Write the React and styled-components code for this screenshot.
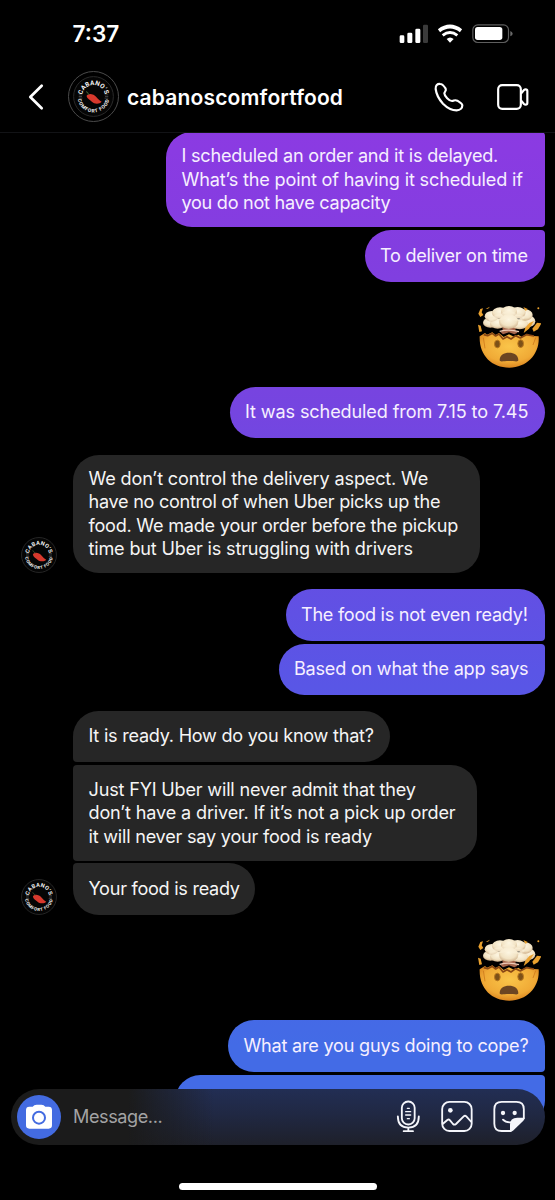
import React from "react"
import styled, { createGlobalStyle, css } from "styled-components"

const FONT = `Inter, "Liberation Sans", sans-serif`

const GlobalStyle = createGlobalStyle`
  * {
    box-sizing: border-box;
  }
  body {
    margin: 0;
    background: #000000;
    font-family: ${FONT};
  }
`

const Screen = styled.div`
  position: relative;
  width: 555px;
  height: 1200px;
  overflow: hidden;
  display: flex;
  flex-direction: column;
  background: #000000;
  color: #ffffff;
`

// ----------- top of the screen --------------
const StatusBar = styled.div`
  height: 66px;
  flex: none;
  display: flex;
  justify-content: space-between;
  align-items: center;
  padding: 0 41px 0 72.5px;
`

const Time = styled.span`
  font-size: 22.6px;
  line-height: 24px;
  font-weight: 600;
  letter-spacing: 0;
  padding-top: 1px;
`

const Header = styled.header`
  height: 67px;
  flex: none;
  display: flex;
  align-items: center;
  padding: 0 25px 5px 27px;
  border-bottom: 1px solid #121316;
`

const Back = styled.svg`
  width: 17px;
  height: 28px;
  margin-right: 24px;
`

const AvatarRing = styled.div`
  width: 51px;
  height: 51px;
  border: 1.5px solid #4b4b4b;
  border-radius: 50%;
  display: flex;
  align-items: center;
  justify-content: center;
`

const UserName = styled.h1`
  margin: 0 0 0 8px;
  padding-top: 3px;
  flex: 1;
  font-size: 21px;
  font-weight: 600;
  line-height: 26px;
  letter-spacing: 0.16px;
`

const CallIcons = styled.div`
  display: flex;
  align-items: center;
  gap: 31px;
`

// ----------- conversation --------------
const Thread = styled.main`
  flex: 1;
  min-height: 0;
  overflow: hidden;
  display: flex;
  flex-direction: column;
`

const Row = styled.div`
  flex: none;
  display: flex;
  align-items: flex-end;
  justify-content: ${props => (props.$mine ? "flex-end" : "flex-start")};
  margin-top: ${props => props.$gap}px;
  padding: 0 10.5px 0 21px;
`

const AvatarSlot = styled.div`
  width: 52px;
  height: 36px;
`

const radius = {
  single: "26px",
  mineFirst: "26px 26px 4px 26px",
  mineMiddle: "26px 4px 4px 26px",
  mineLast: "26px 4px 26px 26px",
  first: "26px 26px 26px 4px",
  middle: "4px 26px 26px 4px",
  last: "4px 26px 26px 26px",
}

const Bubble = styled.div`
  width: ${props => props.$width}px;
  height: ${props => props.$height}px;
  display: flex;
  flex-direction: column;
  justify-content: center;
  padding-left: 15.5px;
  padding-bottom: ${props => (props.$height > 52 ? 0 : 1)}px;
  border-radius: ${props => radius[props.$shape]};
  background: #262626;
  color: #f5f5f5;
  ${props =>
    props.$mine &&
    css`
      background: linear-gradient(
          180deg,
          #9338e2 0px,
          #8a3be2 150px,
          #823ee0 255px,
          #7545e0 412px,
          #6051e4 614px,
          #5a55e6 670px,
          #436be6 1045px,
          #436be6 1200px
        )
        fixed;
      color: #f6efff;
    `}
`

const Line = styled.span`
  font-size: 18.1px;
  line-height: 23.4px;
  letter-spacing: ${props => props.$track}px;
  white-space: nowrap;
`

const EmojiSvg = styled.svg`
  width: 64px;
  height: 64px;
  margin-right: 3.5px;
`

// ----------- composer --------------
const Composer = styled.div`
  position: absolute;
  left: 10.5px;
  top: 1088.5px;
  width: 534px;
  height: 56.5px;
  border-radius: 28.25px;
  display: flex;
  align-items: center;
  padding: 0 19.8px 0 6.5px;
  background:
    linear-gradient(90deg, #1b1b1b 22%, rgba(27, 27, 27, 0) 38%),
    linear-gradient(180deg, #222e54 0%, #202843 45%, #1e202a 100%);
`

const CameraButton = styled.div`
  width: 44px;
  height: 44px;
  border-radius: 50%;
  background: #436be1;
  display: flex;
  align-items: center;
  justify-content: center;
`

const Placeholder = styled.span`
  flex: 1;
  margin-left: 12px;
  padding-bottom: 1px;
  font-size: 18.1px;
  letter-spacing: -0.42px;
  color: #a3a3a4;
`

const ComposerIcons = styled.div`
  display: flex;
  align-items: center;
  gap: 20px;
`

const HomeIndicator = styled.div`
  position: absolute;
  left: 178.5px;
  top: 1183px;
  width: 198.5px;
  height: 6.5px;
  border-radius: 4px;
  background: #ffffff;
`

const Logo = ({ size, id }) => (
  <svg width={size} height={size} viewBox="0 0 100 100">
    <defs>
      <path id={`${id}-top`} d="M22 50 A28 28 0 0 1 78 50" />
      <path id={`${id}-bottom`} d="M11 50 A39 39 0 0 0 89 50" />
    </defs>
    <circle cx="50" cy="50" r="48.5" fill="#050505" stroke="#2b2b2b" strokeWidth="2.4" />
    <g fill="#f4f4f4" fontFamily="Roboto, Inter" fontWeight="700" textAnchor="middle">
      <text fontSize="15.5" letterSpacing="0.5">
        <textPath href={`#${id}-top`} startOffset="50%">
          CABANO’S
        </textPath>
      </text>
      <text fontSize="12" letterSpacing="1.6">
        <textPath href={`#${id}-bottom`} startOffset="50%">
          COMFORT FOOD
        </textPath>
      </text>
    </g>
    <path
      d="M14 46h9M14 50h8M14 54h9M77 46h9M78 50h8M77 54h9"
      stroke="#5c5c5c"
      strokeWidth="1.6"
    />
    <path
      d="M33 49C35 43 43 42 50 46C58 50 59 57 70 63C65 69 52 69 46 63C42 59 35 56 33 49Z"
      fill="#d8392d"
    />
    <path d="M39 46C37 42 35 39 32 38" stroke="#3c5a2f" strokeWidth="2.5" fill="none" />
  </svg>
)

const StatusIcons = () => (
  <svg width="115" height="21" viewBox="57 66 345 63">
    <g fill="#fff">
      <rect x="59" y="103" width="14" height="23" rx="4" />
      <rect x="82" y="95" width="15" height="31" rx="4" />
      <rect x="106" y="83" width="15" height="43" rx="4" />
      <rect x="129" y="71" width="15" height="55" rx="4" fill="#3a3a3a" />
      <path d="M210 125L200 114Q210 105 221 114Z" />
      <rect x="285" y="78" width="82" height="39" rx="8" />
    </g>
    <path d="M177 89Q210 64 243 89" fill="none" stroke="#fff" strokeWidth="11" />
    <path d="M188 103Q210 86 232 103" fill="none" stroke="#fff" strokeWidth="9" />
    <rect
      x="278.5"
      y="71.5"
      width="107"
      height="53"
      rx="15"
      fill="none"
      stroke="#5e5e5e"
      strokeWidth="3.5"
    />
    <path d="M391 90Q398 93 398 98Q398 103 391 106Z" fill="#6a6a6a" />
  </svg>
)

const PhoneIcon = () => (
  <svg width="33" height="33" viewBox="159 240 99 99">
    <path
      d="M181 252C172 251 166 256 167 267C169 284 178 299 189 311C201 323 216 331 230 331C241 331 247 324 247 316C246 311 239 306 232 302C224 298 222 303 216 303C208 303 193 288 193 280C193 276 200 272 197 266C192 258 187 252 181 252Z"
      fill="none"
      stroke="#fff"
      strokeWidth="6.5"
      strokeLinejoin="round"
    />
  </svg>
)

const VideoIcon = () => (
  <svg width="33" height="28" viewBox="351 249 99 84">
    <g fill="none" stroke="#fff" strokeWidth="6.5" strokeLinejoin="round">
      <rect x="354.5" y="255.5" width="68" height="71" rx="12" />
      <path d="M423 281L432 270Q434 268 437 268Q442 268 442 273V309Q442 314 437 314Q434 314 432 312L423 301" />
    </g>
  </svg>
)

const CameraIcon = () => (
  <svg width="28" height="26" viewBox="75 130 84 78">
    <path
      d="M88 138H98L103 134Q106 132 110 132H124Q128 132 131 134L136 138H146Q156 138 156 148V194Q156 204 146 204H88Q78 204 78 194V148Q78 138 88 138Z"
      fill="#fff"
    />
    <circle cx="117" cy="171" r="18" fill="none" stroke="#436be1" strokeWidth="6" />
  </svg>
)

const MicIcon = () => (
  <svg width="25" height="33" viewBox="75 121 75 99">
    <g fill="none" stroke="#f5f6fb" strokeWidth="5.5" strokeLinecap="round">
      <rect x="92.5" y="125.5" width="38.5" height="69" rx="19" />
      <path d="M80.5 170C80.5 192 92 204 112 204C132 204 143.5 192 143.5 170M112 204V214M98 214.5H126" />
      <path d="M109 146H115M104 156H119M104 166H119M109 177H115" strokeWidth="4" />
    </g>
  </svg>
)

const PhotoIcon = () => (
  <svg width="32" height="33" viewBox="212 122 96 99">
    <g fill="none" stroke="#f5f6fb" strokeWidth="5.5" strokeLinejoin="round">
      <rect x="215.5" y="127.5" width="88.5" height="87.5" rx="22" />
      <path d="M217 194L231 182Q235 179 239 183L248 194Q252 198 257 194L280 171Q284 167 288 171L303 188" />
    </g>
    <circle cx="240" cy="153" r="7" fill="#f5f6fb" />
  </svg>
)

const StickerIcon = () => (
  <svg width="32" height="33" viewBox="367 122 96 99">
    <g fill="none" stroke="#f5f6fb" strokeWidth="5.5" strokeLinecap="round">
      <path d="M420 215H393Q371 215 371 193V149.5Q371 127.5 393 127.5H437.5Q459.5 127.5 459.5 149.5V177" />
      <path d="M397 181Q405 190 420 189" />
    </g>
    <path
      d="M418 217V196Q418 175 440 175H462Q462 180 458 184L427 214Q423 217 418 217Z"
      fill="#f5f6fb"
    />
    <circle cx="397" cy="161" r="6.5" fill="#f5f6fb" />
    <circle cx="432" cy="161" r="6.5" fill="#f5f6fb" />
  </svg>
)

const MindBlown = ({ id }) => (
  <EmojiSvg viewBox="36 28 192 192">
    <defs>
      <radialGradient id={`${id}-face`} cx="0.5" cy="0.4" r="0.62">
        <stop offset="0" stopColor="#fac54a" />
        <stop offset="0.7" stopColor="#f0aa36" />
        <stop offset="1" stopColor="#d8811d" />
      </radialGradient>
      <radialGradient id={`${id}-puff`} cx="0.5" cy="0.35" r="0.65">
        <stop offset="0" stopColor="#fdf6e2" />
        <stop offset="0.65" stopColor="#f2e3c4" />
        <stop offset="1" stopColor="#cfb08a" />
      </radialGradient>
    </defs>
    <path
      d="M44 122L60 112L66 117L82 110L92 118L102 112L116 124L132 116L148 124L160 117L170 124L186 114L200 121L221 122C225 174 187 216 133 216C79 216 42 178 44 122Z"
      fill={`url(#${id}-face)`}
    />
    <path
      d="M56 117L68 120L82 113L92 121L102 115L114 130L126 123L138 130L152 120L166 127L184 117L207 121"
      fill="none"
      stroke="#8a4814"
      strokeWidth="5"
      strokeLinejoin="round"
    />
    <path d="M112 92H154L151 104L158 111L148 116L132 110L114 116L107 110L113 104Z" fill="#a5654c" />
    <path d="M104 107Q132 99 162 108" fill="none" stroke="#edcbb7" strokeWidth="4" />
    <g fill={`url(#${id}-puff)`}>
      <ellipse cx="76" cy="81" rx="22" ry="15" />
      <ellipse cx="188" cy="77" rx="23" ry="18" />
      <ellipse cx="164" cy="86" rx="26" ry="15" />
      <ellipse cx="98" cy="84" rx="23" ry="15" />
      <ellipse cx="80" cy="62" rx="21" ry="16" />
      <ellipse cx="181" cy="58" rx="22" ry="17" />
      <ellipse cx="105" cy="52" rx="24" ry="17" />
      <ellipse cx="158" cy="51" rx="24" ry="17" />
      <ellipse cx="132" cy="48" rx="24" ry="17" />
      <ellipse cx="131" cy="78" rx="29" ry="22" />
    </g>
    <g fill="#fdf3dc" opacity="0.55">
      <ellipse cx="106" cy="64" rx="22" ry="9" />
      <ellipse cx="157" cy="66" rx="22" ry="9" />
      <ellipse cx="131" cy="56" rx="22" ry="10" />
      <ellipse cx="86" cy="73" rx="16" ry="6" />
    </g>
    <g fill="#eaa12e">
      <path d="M46 40L54 38L50 50L55 58L46 64L40 54Z" />
      <path d="M62 39L75 33L69 39Z" />
      <path d="M39 87L47 90L51 107L43 109Z" />
      <path d="M175 34L188 40L182 46Z" />
      <circle cx="220" cy="38" r="3" />
      <path d="M193 82L207 76L192 99L176 112L181 96Z" />
      <path d="M216 81L229 83L219 101L206 108L202 99Z" />
    </g>
    <path d="M55 126L60 158M212 126L204 148" stroke="#cf7a1c" strokeWidth="2.5" />
    <g fill="#7c5018" stroke="#b9771d" strokeWidth="3">
      <ellipse cx="97" cy="145" rx="8.5" ry="11.5" />
      <ellipse cx="167" cy="144" rx="8.5" ry="11.5" />
    </g>
    <path
      d="M104 193C105 178 116 171 132 171C148 171 159 178 160 193C160 200 150 196 132 196C114 196 104 200 104 193Z"
      fill="#6c4522"
    />
  </EmojiSvg>
)

// every line is [text, letter-spacing]
const messages = [
  {
    mine: true,
    shape: "mineMiddle",
    gap: -1.5,
    width: 378.5,
    height: 95.5,
    lines: [
      ["I scheduled an order and it is delayed.", -0.21],
      ["What’s the point of having it scheduled if", -0.16],
      ["you do not have capacity", -0.27],
    ],
  },
  {
    mine: true,
    shape: "mineLast",
    gap: 3,
    width: 180,
    height: 51.5,
    lines: [["To deliver on time", -0.25]],
  },
  { mine: true, emoji: true, gap: 23 },
  {
    mine: true,
    shape: "single",
    gap: 18,
    width: 315,
    height: 51.5,
    lines: [["It was scheduled from 7.15 to 7.45", -0.12]],
  },
  {
    shape: "single",
    gap: 16.5,
    width: 407,
    height: 118.5,
    avatar: true,
    lines: [
      ["We don’t control the delivery aspect. We", -0.16],
      ["have no control of when Uber picks up the", -0.28],
      ["food. We made your order before the pickup", -0.23],
      ["time but Uber is struggling with drivers", -0.18],
    ],
  },
  {
    mine: true,
    shape: "mineFirst",
    gap: 16,
    width: 259,
    height: 51.5,
    lines: [["The food is not even ready!", -0.27]],
  },
  {
    mine: true,
    shape: "mineLast",
    gap: 3,
    width: 266,
    height: 51.5,
    lines: [["Based on what the app says", -0.23]],
  },
  {
    shape: "first",
    gap: 15.7,
    width: 317,
    height: 51.5,
    lines: [["It is ready. How do you know that?", -0.25]],
  },
  {
    shape: "middle",
    gap: 3,
    width: 404.4,
    height: 95.5,
    lines: [
      ["Just FYI Uber will never admit that they", -0.19],
      ["don’t have a driver. If it’s not a pick up order", -0.16],
      ["it will never say your food is ready", -0.22],
    ],
  },
  {
    shape: "last",
    gap: 2.6,
    width: 182.4,
    height: 51.5,
    avatar: true,
    lines: [["Your food is ready", -0.27]],
  },
  { mine: true, emoji: true, gap: 23 },
  {
    mine: true,
    shape: "mineFirst",
    gap: 18.3,
    width: 316.5,
    height: 51.5,
    lines: [["What are you guys doing to cope?", -0.22]],
  },
  { mine: true, shape: "mineLast", gap: 3, width: 370, height: 51.5, lines: [] },
]

const Message = ({ message, id }) => (
  <Row $mine={message.mine} $gap={message.gap}>
    {!message.mine && (
      <AvatarSlot>{message.avatar && <Logo size={36} id={id} />}</AvatarSlot>
    )}
    {message.emoji ? (
      <MindBlown id={id} />
    ) : (
      <Bubble
        $mine={message.mine}
        $shape={message.shape}
        $width={message.width}
        $height={message.height}
      >
        {message.lines.map(([text, track]) => (
          <Line key={text} $track={track}>
            {text}
          </Line>
        ))}
      </Bubble>
    )}
  </Row>
)

const App = () => {
  return (
    <Screen>
      <GlobalStyle />
      <StatusBar>
        <Time>7:37</Time>
        <StatusIcons />
      </StatusBar>
      <Header>
        <Back viewBox="0 0 17 28">
          <path
            d="M14.7 2.7L3.3 14L14.7 25.3"
            fill="none"
            stroke="#fff"
            strokeWidth="2.7"
            strokeLinecap="round"
            strokeLinejoin="round"
          />
        </Back>
        <AvatarRing>
          <Logo size={41} id="header" />
        </AvatarRing>
        <UserName>cabanoscomfortfood</UserName>
        <CallIcons>
          <PhoneIcon />
          <VideoIcon />
        </CallIcons>
      </Header>
      <Thread>
        {messages.map((message, i) => (
          <Message key={i} id={`message-${i}`} message={message} />
        ))}
      </Thread>
      <Composer>
        <CameraButton>
          <CameraIcon />
        </CameraButton>
        <Placeholder>Message...</Placeholder>
        <ComposerIcons>
          <MicIcon />
          <PhotoIcon />
          <StickerIcon />
        </ComposerIcons>
      </Composer>
      <HomeIndicator />
    </Screen>
  )
}

export default App
